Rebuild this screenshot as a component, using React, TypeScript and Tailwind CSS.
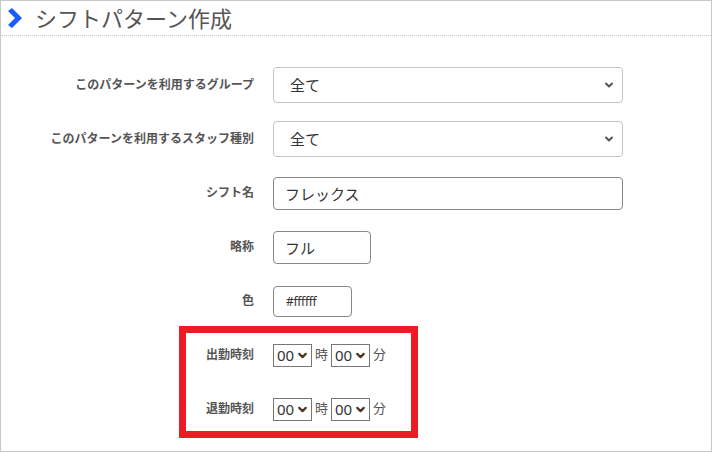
import { ChevronDown } from "lucide-react";

const font = { fontFamily: '"Noto Sans", "Noto Sans CJK JP", sans-serif' };

function Row({ label, children }: { label: string; children: React.ReactNode }) {
  return (
    <div className="flex h-[54px] items-center">
      <div className="w-[253px] shrink-0 text-right text-[12px] font-bold text-[#555]">{label}</div>
      <div className="ml-[19px] flex items-center">{children}</div>
    </div>
  );
}

function BigSelect() {
  return (
    <div className="relative">
      <select className="h-[36px] w-[350px] appearance-none rounded-[4px] border border-[#c4c4c4] bg-white pl-[16px] text-[15px] text-[#333]">
        <option>全て</option>
      </select>
      <ChevronDown
        size={12}
        strokeWidth={4}
        className="pointer-events-none absolute right-[8px] top-[12px] text-[#555]"
      />
    </div>
  );
}

function TimeSelect() {
  return (
    <div className="relative">
      <select className="h-[23px] w-[39px] appearance-none border border-[#777] bg-white pl-[3px] text-[15px] leading-none text-[#333]">
        <option>00</option>
      </select>
      <ChevronDown
        size={13}
        strokeWidth={4}
        className="pointer-events-none absolute right-[3px] top-[5px] text-[#4a3520]"
      />
    </div>
  );
}

function TimeRow({ label }: { label: string }) {
  return (
    <Row label={label}>
      <div className="flex items-center gap-[3px] text-[13px] text-[#555]">
        <TimeSelect />
        <span>時</span>
        <TimeSelect />
        <span>分</span>
      </div>
    </Row>
  );
}

export default function App() {
  return (
    <div style={font} className="relative h-[452px] w-[712px] border border-[#c8c8c8] bg-white">
      {/* タイトル */}
      <div className="flex h-[35px] items-center border-b border-dotted border-[#c8c8c8] pl-[6px]">
        <svg width="16" height="20" viewBox="0 0 16 20" className="shrink-0">
          <path d="M1 3 L5 0 L15 10 L5 20 L1 17 L8 10 Z" fill="#1a5cff" />
        </svg>
        <h1 className="ml-[12px] text-[22px] leading-none text-[#555]">シフトパターン作成</h1>
      </div>

      <div className="pt-[22px]">
        <Row label="このパターンを利用するグループ">
          <BigSelect />
        </Row>
        <Row label="このパターンを利用するスタッフ種別">
          <BigSelect />
        </Row>
        <Row label="シフト名">
          <input
            defaultValue="フレックス"
            className="h-[33px] w-[350px] rounded-[4px] border border-[#888] px-[11px] text-[15px] text-[#333]"
          />
        </Row>
        <Row label="略称">
          <input
            defaultValue="フル"
            className="h-[33px] w-[98px] rounded-[4px] border border-[#888] px-[11px] text-[15px] text-[#333]"
          />
        </Row>
        <Row label="色">
          <input
            defaultValue="#ffffff"
            className="h-[31px] w-[79px] rounded-[4px] border border-[#888] px-[12px] text-[12px] tracking-[-0.3px] text-[#333]"
          />
        </Row>
        <TimeRow label="出勤時刻" />
        <TimeRow label="退勤時刻" />
      </div>

      {/* 強調枠 */}
      <div className="pointer-events-none absolute left-[178px] top-[325px] h-[112px] w-[239px] border-[7px] border-[#ed1c24]" />
    </div>
  );
}
